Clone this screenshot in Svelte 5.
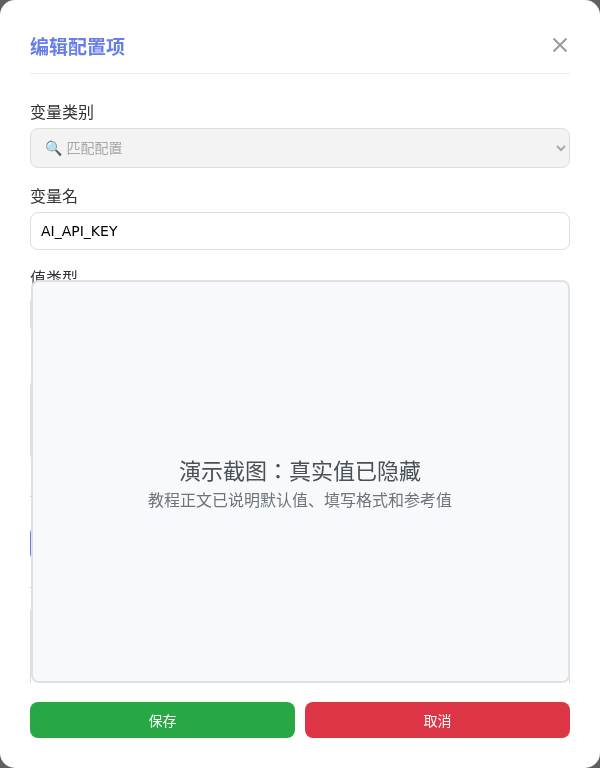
<script>
  const fields = [
    { label: '变量类别', kind: 'select', value: '🔍 匹配配置', disabled: true },
    { label: '变量名', kind: 'input', value: 'AI_API_KEY' },
    { label: '值类型', kind: 'select', value: '字符串' }
  ];
</script>

<div class="backdrop">
  <div class="modal">
    <header class="head">
      <h2>编辑配置项</h2>
      <button class="close" aria-label="关闭">
        <svg width="16" height="16" viewBox="0 0 16 16"><path d="M1.5 1.5 L14.5 14.5 M14.5 1.5 L1.5 14.5" stroke="#999" stroke-width="2" fill="none" /></svg>
      </button>
    </header>
    <div class="body">
      <form class="form">
        {#each fields as f}
          <div class="field">
            <label>{f.label}</label>
            {#if f.kind === 'select'}
              <select disabled={f.disabled}><option>{f.value}</option></select>
            {:else}
              <input value={f.value} />
            {/if}
          </div>
        {/each}
        <div class="field">
          <label>变量值</label>
          <textarea></textarea>
        </div>
        <div class="field second">
          <label>说明</label>
          <button type="button" class="fill">生成</button>
        </div>
        <div class="field">
          <label>备注</label>
          <textarea class="tall"></textarea>
        </div>
      </form>
      <div class="mask">
        <div class="mask-title">演示截图：真实值已隐藏</div>
        <div class="mask-sub">教程正文已说明默认值、填写格式和参考值</div>
      </div>
    </div>
    <footer class="foot">
      <button class="save">保存</button>
      <button class="cancel">取消</button>
    </footer>
  </div>
</div>

<style>
  :global(body) {
    margin: 0;
    background: #5f5f5f;
  }
  .backdrop {
    width: 600px;
    height: 768px;
    font-family: "DejaVu Sans", "Noto Sans CJK JP", sans-serif;
    color: #333;
  }
  .modal {
    box-sizing: border-box;
    height: 768px;
    padding: 30px;
    background: #fff;
    border-radius: 15px;
    display: flex;
    flex-direction: column;
    will-change: transform;
  }
  .head {
    box-sizing: border-box;
    height: 44px;
    padding: 1px 0 14px;
    border-bottom: 1px solid #eee;
    display: flex;
    justify-content: space-between;
    align-items: center;
  }
  h2 {
    margin: 0;
    font-size: 19px;
    font-weight: 700;
    color: #667eea;
  }
  .close {
    box-sizing: border-box;
    width: 20px;
    height: 20px;
    border: 0;
    padding: 2px;
    background: none;
    display: flex;
  }
  .body {
    position: relative;
    flex: 1;
    min-height: 0;
    margin-bottom: 19px;
  }
  .form {
    position: absolute;
    inset: 0;
    overflow: hidden;
    padding-top: 30px;
    display: flex;
    flex-direction: column;
    gap: 20px;
  }
  .field {
    display: flex;
    flex-direction: column;
    gap: 6px;
    flex: none;
  }
  .second {
    margin-top: 8px;
    gap: 19px;
  }
  label {
    font-size: 16px;
    line-height: 18px;
  }
  select, input, textarea {
    box-sizing: border-box;
    width: 100%;
    border: 1px solid #ddd;
    border-radius: 8px;
    font: inherit;
    font-size: 14px;
    color: #000;
    background: #fff;
    padding: 0 10px;
  }
  select {
    height: 40px;
  }
  select:disabled {
    background: #f3f3f3;
    color: #a8a8a8;
    opacity: 1;
  }
  input {
    height: 38px;
  }
  textarea {
    height: 84px;
    display: block;
    resize: none;
  }
  textarea.tall {
    height: 120px;
  }
  .fill {
    height: 33px;
    width: 100%;
    border: 0;
    border-radius: 6px;
    background: #667eea;
  }
  .mask {
    position: absolute;
    left: 1px;
    top: 206px;
    right: 0;
    bottom: 0;
    box-sizing: border-box;
    padding: 6px 1px 0 0;
    background: #f8f9fa;
    border: 2px solid #dee2e6;
    border-radius: 8px;
    display: flex;
    flex-direction: column;
    align-items: center;
    justify-content: center;
    gap: 3px;
  }
  .mask-title {
    font-size: 22px;
    line-height: 30px;
    color: #495057;
  }
  .mask-sub {
    font-size: 16px;
    line-height: 22px;
    color: #6c757d;
  }
  .foot {
    display: flex;
    gap: 10px;
  }
  .foot button {
    flex: 1;
    height: 36px;
    border: 0;
    border-radius: 8px;
    color: #fff;
    font: inherit;
    font-size: 14px;
  }
  .save {
    background: #28a745;
  }
  .cancel {
    background: #dc3545;
  }
</style>
